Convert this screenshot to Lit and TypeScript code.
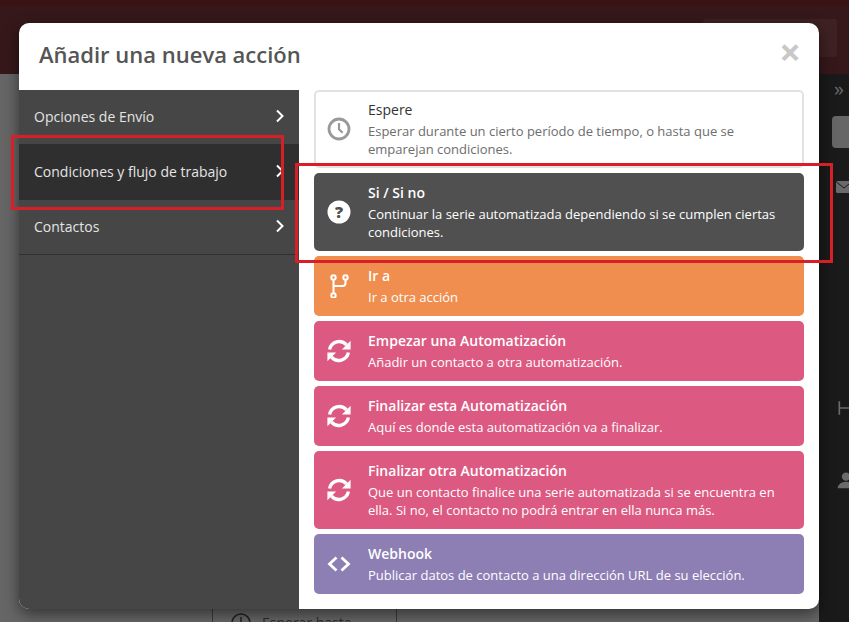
import { LitElement, html, css, svg } from "lit";
import { customElement } from "lit/decorators.js";

const sync = svg`<g fill="none" stroke="currentColor" stroke-width="3.400"><path d="M2.600 10.500A9.800 9.800 0 0 1 19.500 5.800"/><path d="M21.400 13.500A9.800 9.800 0 0 1 4.500 18.200"/></g><path fill="currentColor" d="M23.600 1.800v8.700h-8.700zM.4 22.200v-8.700h8.700z"/>`;
const icons: Record<string, unknown> = {
  clock: svg`<circle cx="12" cy="12" r="10" fill="none" stroke="currentColor" stroke-width="2.800"/><path d="M12 6v6.400l3.600 3.400" fill="none" stroke="currentColor" stroke-width="2.200"/>`,
  help: svg`<circle cx="12" cy="12" r="11.500" fill="currentColor"/><text x="12" y="18" text-anchor="middle" font-family="Open Sans" font-weight="800" font-size="16" fill="#505050">?</text>`,
  branch: svg`<g fill="none" stroke="currentColor" stroke-width="2"><circle cx="6.500" cy="3.500" r="2.200"/><circle cx="6.500" cy="21.500" r="2.200"/><circle cx="18.500" cy="3.500" r="2.200"/><path d="M6.500 5.700v13.600M18.500 5.700v3.300q0 3-3 3h-9"/></g>`,
  sync,
  code: svg`<path d="M9.500 5.500 2.500 12l7 6.500M14.500 5.500l7 6.500-7 6.500" fill="none" stroke="currentColor" stroke-width="2.800"/>`,
};

const cards = [
  { k: "wait", i: "clock", t: "Espere", d: "Esperar durante un cierto período de tiempo, o hasta que se emparejan condiciones." },
  { k: "cond", i: "help", t: "Si / Si no", d: "Continuar la serie automatizada dependiendo si se cumplen ciertas condiciones." },
  { k: "goto", i: "branch", t: "Ir a", d: "Ir a otra acción" },
  { k: "auto", i: "sync", t: "Empezar una Automatización", d: "Añadir un contacto a otra automatización." },
  { k: "auto", i: "sync", t: "Finalizar esta Automatización", d: "Aquí es donde esta automatización va a finalizar." },
  { k: "auto", i: "sync", t: "Finalizar otra Automatización", d: "Que un contacto finalice una serie automatizada si se encuentra en ella. Si no, el contacto no podrá entrar en ella nunca más." },
  { k: "hook", i: "code", t: "Webhook", d: "Publicar datos de contacto a una dirección URL de su elección." },
];
const menu = ["Opciones de Envío", "Condiciones y flujo de trabajo", "Contactos"];

@customElement("app-root")
export class AppRoot extends LitElement {
  static styles = css`
    :host { display: block; position: relative; width: 849px; height: 622px; overflow: hidden; font-family: "Open Sans", sans-serif; background: #666; }
    * { box-sizing: border-box; }
    .page { height: 622px; display: flex; flex-direction: column; }
    .topbar { height: 74px; background: #36181a; position: relative; flex: none; }
    .topbar .strip { height: 7px; background: #3a1316; }
    .topbar .ghost { position: absolute; left: 703px; top: 19px; width: 134px; height: 38px; background: #3e2123; border-radius: 3px; }
    .under { flex: 1; display: flex; }
    .under .left { width: 212px; background: #666; }
    .under .mid { width: 185px; background: #666; border-left: 1px solid #3c3c3c; border-right: 1px solid #3c3c3c; display: flex; align-items: flex-start; padding-top: 539px; }
    .under .fill { flex: 1; background: #666; }
    .under .right { width: 30px; background: #1a1a1a; display: flex; flex-direction: column; align-items: flex-start; color: #6a6a6a; }
    .mid .peek { display: flex; gap: 11px; align-items: flex-start; padding-left: 18px; color: #2c2c2c; font-size: 14px; line-height: 19px; flex: none; }
    .mid .peek svg { width: 20px; height: 20px; flex: none; color: #222; }
    .right .chev { font-size: 20px; margin: 4px 0 0 15px; line-height: 22px; }
    .right .btn { width: 30px; height: 32px; margin: 16px 0 0 13px; background: #666; border-radius: 4px 0 0 4px; flex: none; }
    .right .mail { width: 16px; height: 12px; margin: 33px 0 0 17px; flex: none; color: #6a6a6a; display: block; }
    .right .r-ico { width: 20px; height: 20px; flex: none; margin-left: 17px; }

    .modal { position: absolute; left: 19px; top: 23px; width: 800px; height: 586px; background: #fff; border-radius: 10px; overflow: hidden; display: flex; flex-direction: column; box-shadow: 0 5px 15px rgba(0,0,0,.5); }
    .head { height: 67px; flex: none; display: flex; justify-content: space-between; padding: 15px 19px 0 20px; }
    h2 { margin: 0; font-size: 22px; font-weight: 600; line-height: 32px; color: #555; }
    .close { font-size: 38px; font-weight: 700; line-height: 26px; color: #c8c8c8; margin-right: -1px; }
    .body { flex: 1; display: flex; min-height: 0; }
    nav { width: 280px; background: #464646; flex: none; }
    .item { height: 55px; display: flex; align-items: center; justify-content: space-between; padding: 0 15px 2px; font-size: 14px; color: #e4e4e4; }
    .item:nth-child(1) { height: 54px; }
    .item.active { background: #2f2f2f; height: 56px; }
    .item:last-child { border-bottom: 1px solid #303030; }
    .item svg { width: 8px; height: 14px; color: #fff; }
    .list { flex: 1; padding: 0 15px; display: flex; flex-direction: column; gap: 5px; }
    .card { display: flex; align-items: center; border-radius: 5px; color: #fff; padding: 10px 12px 10px 13px; }
    .card .ic { width: 24px; height: 24px; flex: none; margin-right: 17px; }
    .card .t { font-size: 14px; font-weight: 600; line-height: 20px; }
    .card .d { font-size: 13px; line-height: 18px; margin-top: 2px; }
    .wait { background: #fff; border: 2px solid #e2e2e2; color: #555; padding: 8px 10px 8px 11px; }
    .wait .t { font-weight: 400; color: #333; }
    .wait .d { color: #6d6d6d; }
    .wait .ic { color: #999; }
    .cond { background: #505050; }
    .goto { background: #ef8e4f; }
    .auto { background: #dc5981; }
    .hook { background: #8d7eb4; }
    .mark { position: absolute; border: 3px solid #d71f27; pointer-events: none; }
    .mark.a { left: 11px; top: 135px; width: 273px; height: 75px; }
    .mark.b { left: 295px; top: 163px; width: 538px; height: 100px; }
  `;
  render() {
    return html`
      <div class="page">
        <div class="topbar"><div class="strip"></div><div class="ghost"></div></div>
        <div class="under">
          <div class="left"></div>
          <div class="mid"><div class="peek"><svg viewBox="0 0 20 20"><circle cx="10" cy="10" r="9" fill="none" stroke="currentColor" stroke-width="1.500"/><path d="M10 4v7" stroke="currentColor" stroke-width="1.500"/></svg><span>Esperar hasta</span></div></div>
          <div class="fill"></div>
          <div class="right">
            <span class="chev">»</span><div class="btn"></div>
            <svg class="mail" viewBox="0 0 16 12"><rect width="16" height="12" rx="1.500" fill="currentColor"/><path d="M.5 1 8 7l7.500-6" fill="none" stroke="#1a1a1a" stroke-width="1"/></svg>
            <svg class="r-ico" style="margin-top:205px" viewBox="0 0 24 24"><path d="M4 4v16M4 12h16" stroke="currentColor" stroke-width="2" fill="none"/></svg>
            <svg class="r-ico" style="margin-top:52px" viewBox="0 0 24 24"><circle cx="12" cy="8" r="5" fill="currentColor"/><path d="M2 22q1-8 10-8t10 8z" fill="currentColor"/></svg>
          </div>
        </div>
      </div>
      <div class="modal">
        <div class="head"><h2>Añadir una nueva acción</h2><span class="close">×</span></div>
        <div class="body">
          <nav>
            ${menu.map((m, i) => html`<div class="item ${i === 1 ? "active" : ""}"><span>${m}</span>
              <svg viewBox="0 0 8 14"><path d="M1 1.500 6.500 7 1 12.500" fill="none" stroke="currentColor" stroke-width="2"/></svg></div>`)}
          </nav>
          <div class="list">
            ${cards.map((c) => html`<div class="card ${c.k}">
              <svg class="ic" viewBox="0 0 24 24">${icons[c.i]}</svg>
              <div><div class="t">${c.t}</div><div class="d">${c.d}</div></div>
            </div>`)}
          </div>
        </div>
      </div>
      <div class="mark a"></div>
      <div class="mark b"></div>
    `;
  }
}
